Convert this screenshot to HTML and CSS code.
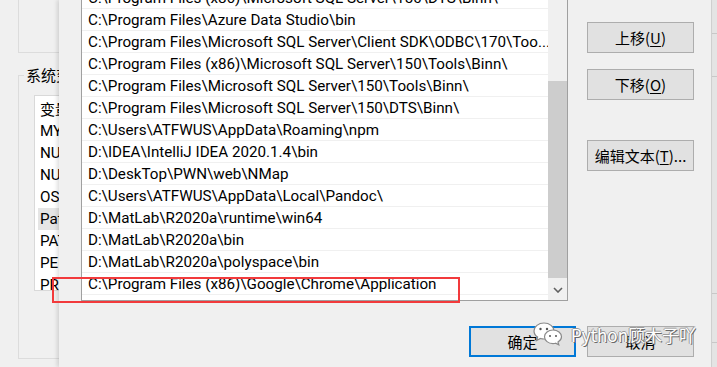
FILE: index.html
```html
<!DOCTYPE html>
<html lang="zh-CN">
<head>
  <meta charset="UTF-8">
  <meta name="viewport" content="width=device-width, initial-scale=1.0">
  <title>编辑环境变量</title>
  <link rel="stylesheet" href="styles.css">
</head>
<body>
  <div class="screen">
    <div class="backwin">
      <div class="grp-top"></div>
      <fieldset class="grp-sys">
        <legend>系统变量(S)</legend>
        <div class="varlist">
          <div class="varhead">变量</div>
          <div class="varrow">MYSQL_HOME</div>
          <div class="varrow">NUGET_HOME</div>
          <div class="varrow">NUMBER_OF_PROCESSORS</div>
          <div class="varrow">OS</div>
          <div class="varrow sel">Path</div>
          <div class="varrow">PATHEXT</div>
          <div class="varrow">PERL5LIB</div>
          <div class="varrow">PROCESSOR_ARCHITECTURE</div>
        </div>
      </fieldset>
    </div>

    <div class="dialog">
      <div class="dlg-main">
        <div class="pathbox">
          <div class="pathlist">
            <ul class="paths">
              <li>C:\Program Files (x86)\Microsoft SQL Server\150\DTS\Binn\</li>
              <li>C:\Program Files\Azure Data Studio\bin</li>
              <li>C:\Program Files\Microsoft SQL Server\Client SDK\ODBC\170\Too...</li>
              <li>C:\Program Files (x86)\Microsoft SQL Server\150\Tools\Binn\</li>
              <li>C:\Program Files\Microsoft SQL Server\150\Tools\Binn\</li>
              <li>C:\Program Files\Microsoft SQL Server\150\DTS\Binn\</li>
              <li>C:\Users\ATFWUS\AppData\Roaming\npm</li>
              <li>D:\IDEA\IntelliJ IDEA 2020.1.4\bin</li>
              <li>D:\DeskTop\PWN\web\NMap</li>
              <li>C:\Users\ATFWUS\AppData\Local\Pandoc\</li>
              <li>D:\MatLab\R2020a\runtime\win64</li>
              <li>D:\MatLab\R2020a\bin</li>
              <li>D:\MatLab\R2020a\polyspace\bin</li>
              <li>C:\Program Files (x86)\Google\Chrome\Application</li>
            </ul>
          </div>
          <div class="vscroll">
            <div class="thumb"></div>
            <div class="arrow">
              <svg width="10" height="6" viewBox="0 0 10 6"><polyline points="1,1 5,5 9,1" fill="none" stroke="#606060" stroke-width="1.6"/></svg>
            </div>
          </div>
        </div>
        <div class="side">
          <button class="btn">上移(<u>U</u>)</button>
          <button class="btn">下移(<u>O</u>)</button>
          <button class="btn gap">编辑文本(<u>T</u>)...</button>
        </div>
      </div>
      <div class="dlg-foot">
        <button class="btn default">确定</button>
        <button class="btn">取消</button>
      </div>
    </div>

    <div class="edge">
      <div class="edge-line l1"></div>
      <div class="edge-line l2"></div>
      <div class="edge-line l3"></div>
      <div class="edge-line l4"></div>
    </div>

    <div class="redbox"></div>

    <div class="mark">
      <svg class="wx" width="32" height="28" viewBox="0 0 32 28">
        <path d="M12 2C6.5 2 2 5.6 2 10c0 2.5 1.4 4.6 3.6 6.1L4.6 19.5l3.8-2c1.1.3 2.3.5 3.6.5 5.5 0 10-3.6 10-8S17.5 2 12 2z" fill="#fff" stroke="#8a8a8a" stroke-width="1.2"/>
        <path d="M21 9c-4.7 0-8.5 3-8.5 6.8s3.8 6.8 8.5 6.8c.9 0 1.8-.1 2.6-.4l3.2 1.7-.8-2.8c2-1.2 3.5-3.1 3.5-5.3C29.5 12 25.7 9 21 9z" fill="#fff" stroke="#8a8a8a" stroke-width="1.2"/>
        <circle cx="8.5" cy="8" r="1.2" fill="#555"/>
        <circle cx="15" cy="8" r="1.2" fill="#555"/>
        <circle cx="18" cy="15" r="1" fill="#555"/>
        <circle cx="24" cy="15" r="1" fill="#555"/>
      </svg>
      <span class="mark-text">Python顾木子吖</span>
    </div>
  </div>
</body>
</html>
```

FILE: styles.css
```css
:root {
  --win: #f0f0f0;
  --line: #dcdcdc;
  --btn: #e1e1e1;
  --btn-border: #adadad;
  --accent: #0078d7;
}
* { box-sizing: border-box; margin: 0; padding: 0; }
body {
  font-family: Roboto, "Noto Sans CJK SC", sans-serif;
  font-size: 15.2px;
  color: #000;
  background: var(--win);
  overflow: hidden;
}
.screen {
  position: relative;
  display: flex;
  width: 717px;
  height: 367px;
  overflow: hidden;
  background: var(--win);
}

/* window behind */
.backwin {
  width: 59px;
  flex: none;
  overflow: hidden;
}
.grp-top {
  margin-left: 18px;
  width: 200px;
  height: 53px;
  border-left: 1px solid var(--line);
  border-bottom: 1px solid var(--line);
}
.grp-sys {
  margin: 11px 0 0 18px;
  width: 400px;
  height: 295px;
  border: 1px solid var(--line);
  padding: 0 0 0 15px;
}
.grp-sys legend {
  margin-left: -10px;
  padding: 0 2px;
  line-height: 22px;
  font-family: "Noto Sans CJK SC", sans-serif;
  font-size: 15px;
}
.varlist {
  margin-top: 9px;
  height: 196px;
  background: #fff;
  border: 1px solid #d9d9d9;
  border-right: none;
  overflow: hidden;
  padding-left: 3px;
}
.varhead {
  height: 24px;
  line-height: 26px;
  padding-left: 2px;
  font-family: "Noto Sans CJK SC", sans-serif;
  font-size: 15px;
}
.varrow {
  height: 22px;
  line-height: 22px;
  padding-left: 2px;
  white-space: nowrap;
}
.varrow.sel { background: #e5e5e5; }

/* path editor dialog */
.dialog {
  position: relative;
  flex: 1;
  display: flex;
  flex-direction: column;
  padding-left: 22px;
  background: var(--win);
  box-shadow: -2px 0 4px rgba(0, 0, 0, 0.13);
}
.dlg-main {
  display: flex;
}
.pathbox {
  display: flex;
  width: 487px;
  height: 301px;
  background: #fff;
  border: 1px solid #a0a0a0;
  border-top: none;
}
.pathlist {
  flex: 1;
  overflow: hidden;
}
.paths {
  list-style: none;
  margin-top: -13px;
}
.paths li {
  height: 22px;
  padding: 1px 0 0 6px;
  line-height: 21px;
  border-bottom: 1px solid #f0f0f0;
  white-space: nowrap;
  overflow: hidden;
}
.vscroll {
  width: 19px;
  display: flex;
  flex-direction: column;
  background: var(--win);
}
.thumb {
  margin-top: 81px;
  height: 197px;
  background: #cdcdcd;
}
.arrow {
  margin-top: auto;
  height: 20px;
  display: flex;
  align-items: center;
  justify-content: center;
}
.side {
  display: flex;
  flex-direction: column;
  gap: 16px;
  margin-left: 19px;
  padding-top: 22px;
}
.btn {
  width: 107px;
  height: 31px;
  background: var(--btn);
  border: 1px solid var(--btn-border);
  font-family: "Noto Sans CJK SC", sans-serif;
  font-size: 15px;
  color: #000;
}
.btn u { text-decoration-thickness: 1px; text-underline-offset: 2px; }
.btn.gap { margin-top: 24px; }
.btn.default {
  border: 2px solid var(--accent);
}
.dlg-foot {
  display: flex;
  justify-content: flex-end;
  gap: 11px;
  margin-top: 25px;
  padding-right: 17px;
}

/* edge of another window */
.edge {
  width: 6px;
  flex: none;
  background: #e4e4e4;
  border-left: 1px solid #d2d2d2;
  display: flex;
  flex-direction: column;
}
.edge-line { height: 1px; background: #c8c8c8; }
.edge-line.l1 { margin-top: 33px; }
.edge-line.l2 { margin-top: 42px; }
.edge-line.l3 { margin-top: 216px; }
.edge-line.l4 { margin-top: 48px; }

/* annotation overlays */
.redbox {
  position: absolute;
  left: 52px;
  top: 277px;
  width: 408px;
  height: 26px;
  border: 2px solid #f23a3c;
}
.mark {
  position: absolute;
  left: 532px;
  top: 321px;
  display: flex;
  align-items: center;
  gap: 7px;
}
.mark-text {
  font-family: "Noto Sans CJK SC", sans-serif;
  font-size: 17px;
  color: #fff;
  text-shadow: 1px 1px 0 #6a6a6a, -1px 0 0 #9a9a9a, 0 -1px 0 #9a9a9a;
  line-height: 24px;
}
```
